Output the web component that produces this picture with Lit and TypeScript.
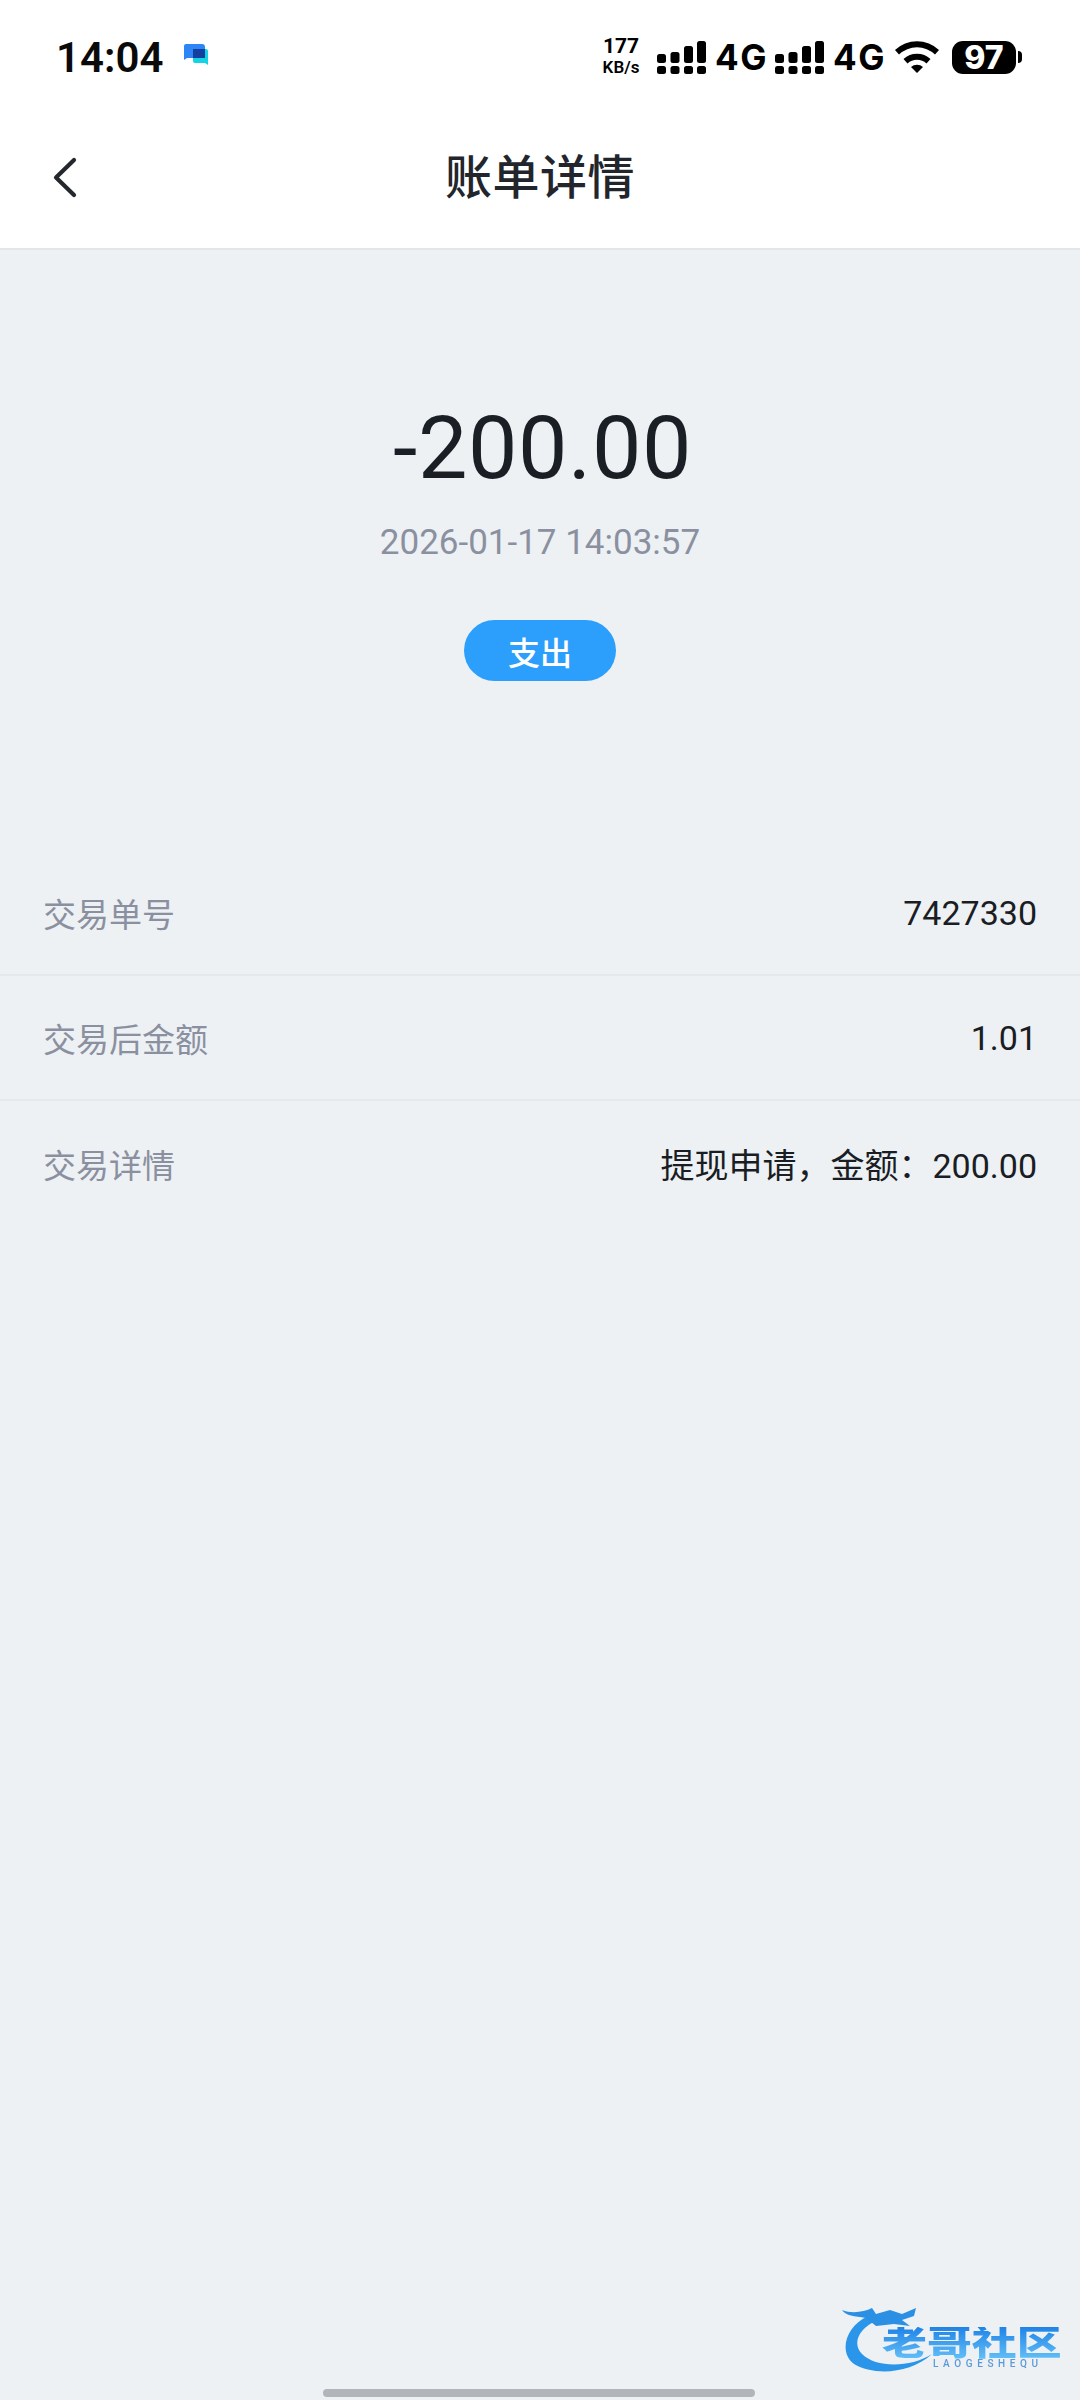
import { LitElement, html, css, svg } from "lit";
import { customElement } from "lit/decorators.js";

const rows = [
  { label: "交易单号", value: "7427330" },
  { label: "交易后金额", value: "1.01" },
  { label: "交易详情", value: "提现申请\uFF0C金额\uFF1A200.00" },
];

const STEM_TOPS = [13, 11, 5, 0];

const signal = () => html`<svg class="signal" width="49" height="33" viewBox="0 0 49 33">
  ${[0, 13.5, 27, 40].map((x, i) => svg`
    <rect x=${x} y=${STEM_TOPS[i]} width="9" height=${22 - STEM_TOPS[i]} rx="2.500" fill="#000"></rect>
    <rect x=${x} y="25" width="9" height="8" rx="2.500" fill="#000"></rect>`)}
</svg>`;

@customElement("app-root")
export class AppRoot extends LitElement {
  static styles = css`
    :host {
      display: flex;
      flex-direction: column;
      position: relative;
      width: 1080px;
      height: 2400px;
      overflow: hidden;
      background: #edf1f4;
      font-family: Roboto, "Noto Sans CJK SC", sans-serif;
      color: #1a1d23;
    }
    .top { background: #fff; border-bottom: 2px solid #e3e5e9; height: 250px; box-sizing: border-box; }
    .status { height: 90px; display: flex; align-items: center; padding: 0 58px 0 56px; }
    .time { font-size: 42px; font-weight: 600; color: #0a0a0a; line-height: 1; margin-top: 26px; }
    .app { margin: 24px 0 0 18px; display: block; }
    .status-right { margin-left: auto; margin-top: 24px; display: flex; align-items: center; }
    .speed { display: flex; flex-direction: column; align-items: center; font-weight: 600; color: #000; width: 40px; margin-right: 16px; }
    .speed b { font-size: 21px; line-height: 21px; font-weight: 700; }
    .speed i { font-style: normal; font-size: 17px; line-height: 21px; white-space: nowrap; font-weight: 600; }
    .net { font-family: Inter, sans-serif; font-size: 35px; font-weight: 700; letter-spacing: 1.5px; color: #000; line-height: 1; width: 51px; text-align: center; margin: 0 9px; white-space: nowrap; }
    .wifi { margin-left: 1px; }
    .battery { display: flex; align-items: center; margin-left: 12px; }
    .cell { width: 64px; height: 33px; border-radius: 11px; background: #000; color: #fff; font-family: Inter, sans-serif; font-size: 32px; font-weight: 800; line-height: 33px; text-align: center; }
    .nub { width: 4px; height: 12px; background: #000; border-radius: 0 4px 4px 0; margin-left: 2px; }
    .nav { height: 158px; display: flex; align-items: center; justify-content: center; position: relative; }
    .back { position: absolute; left: 52px; top: 67px; }
    .title { font-size: 47px; font-weight: 500; color: #22252b; letter-spacing: 0.5px; margin-top: 9px; }
    .hero { display: flex; flex-direction: column; align-items: center; padding-top: 138px; }
    .amount { font-size: 88px; letter-spacing: 0.6px; line-height: 120px; color: #1a1e25; font-weight: 400; padding-left: 5px; }
    .date { font-size: 35px; line-height: 48px; color: #8b90a0; margin-top: 11px; }
    .pill { margin-top: 53px; width: 152px; height: 61px; border-radius: 31px; background: #2b9ffb; color: #fff; font-size: 32px; font-weight: 500; display: flex; align-items: center; justify-content: center; }
    .list { margin-top: 170px; }
    .row { height: 125px; box-sizing: border-box; padding: 0 43px; display: flex; align-items: center; justify-content: space-between; border-bottom: 2px solid #e5e8ed; }
    .row:last-child { border-bottom: none; }
    .label { font-size: 33px; color: #8b90a0; }
    .value { font-size: 34px; color: #1a1d23; }
    .home { position: absolute; left: 323px; bottom: 3px; width: 432px; height: 8px; border-radius: 4px; background: #b2b5b9; }
    .mark { position: absolute; left: 840px; top: 2302px; width: 240px; height: 98px; filter: blur(0.7px); }
    .dragon { position: absolute; left: 0; top: 0; }
    .mark-name { position: absolute; left: 42px; top: 25px; font-size: 34px; line-height: 32px; font-weight: 900; white-space: nowrap;
      transform: scaleX(1.32); transform-origin: left center;
      background: linear-gradient(#1f83e6, #63bff7); -webkit-background-clip: text; background-clip: text; color: transparent; }
    .mark-sub { position: absolute; left: 93px; top: 57px; font-size: 10px; line-height: 10px; font-weight: 500; letter-spacing: 4.6px; color: #5a9ad8; white-space: nowrap; }
  `;

  render() {
    return html`
      <div class="top">
        <div class="status">
          <span class="time">14:04</span>
          <svg class="app" width="30" height="30" viewBox="0 0 30 30">
            <path d="M5 2h16a3 3 0 0 1 3 3v11H6l-3 2V4a2 2 0 0 1 2-2z" fill="#2e86f6"></path>
            <path d="M12 7h13a2 2 0 0 1 2 2v14l-3-2H14a2 2 0 0 1-2-2z" fill="#14d4e4"></path>
            <path d="M12 7h12v9H12z" fill="#13409f"></path>
          </svg>
          <div class="status-right">
            <div class="speed"><b>177</b><i>KB/s</i></div>
            ${signal()}<span class="net">4G</span>${signal()}<span class="net">4G</span>
            <svg class="wifi" width="46" height="32" viewBox="0 0 46 32">
              <path d="M1 9a32 32 0 0 1 44 0l-4 4.500a26 26 0 0 0-36 0z" fill="#000"></path>
              <path d="M9.500 18a20 20 0 0 1 27 0l-4 4.500a14 14 0 0 0-19 0z" fill="#000"></path>
              <path d="M17 26a9 9 0 0 1 12 0l-6 6z" fill="#000"></path>
            </svg>
            <div class="battery"><div class="cell">97</div><div class="nub"></div></div>
          </div>
        </div>
        <div class="nav">
          <svg class="back" width="26" height="42" viewBox="0 0 26 42">
            <path d="M22 3 4 20.500 22 38" fill="none" stroke="#24272c" stroke-width="4.200" stroke-linecap="round" stroke-linejoin="round"></path>
          </svg>
          <span class="title">账单详情</span>
        </div>
      </div>
      <div class="hero">
        <div class="amount">-200.00</div>
        <div class="date">2026-01-17 14:03:57</div>
        <div class="pill">支出</div>
      </div>
      <div class="list">
        ${rows.map((r) => html`<div class="row"><span class="label">${r.label}</span><span class="value">${r.value}</span></div>`)}
      </div>
      <div class="mark">
        <svg class="dragon" width="100" height="98" viewBox="0 0 100 98">
          <path d="M28 14C6 24-2 50 14 62c20 12 56 10 78-10C70 66 36 66 22 52 12 42 18 26 38 18z" fill="#2b95ea"></path>
          <path d="M2 8c10 4 22 2 30-2l4 6 14-4 12 4 14-6-2 8-12 4 8 6-16-2-18 2-10-8C14 14 6 14 2 8z" fill="#2b8fe4"></path>
        </svg>
        <span class="mark-name">老哥社区</span>
        <span class="mark-sub">LAOGESHEQU</span>
      </div>
      <div class="home"></div>
    `;
  }
}
